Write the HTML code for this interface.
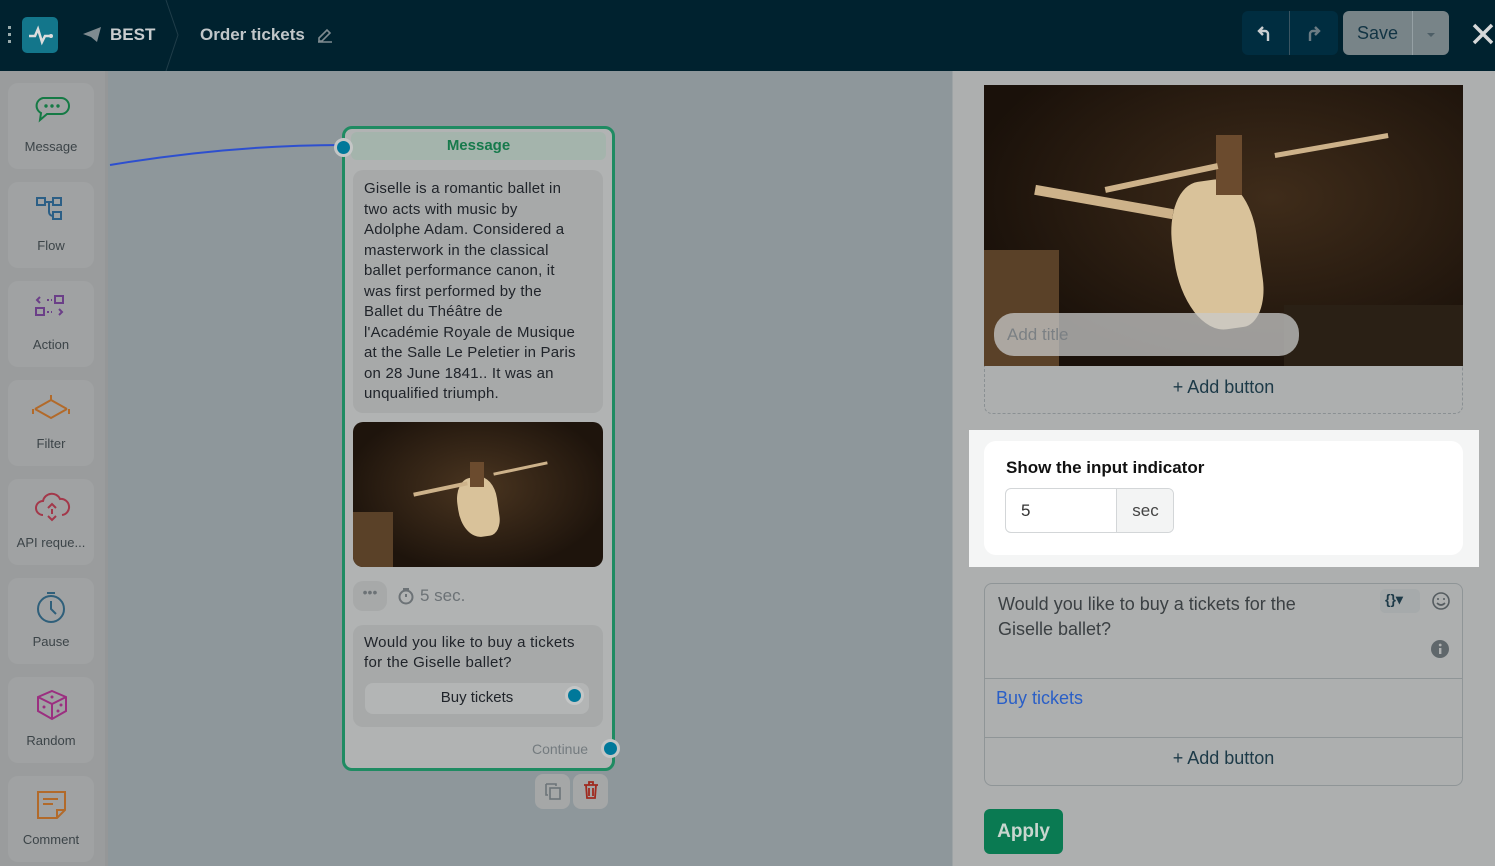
<!DOCTYPE html>
<html><head><meta charset="utf-8"><style>
*{box-sizing:border-box;margin:0;padding:0}
body{width:1495px;height:866px;overflow:hidden;font-family:"Liberation Sans",sans-serif;background:#8e979b;position:relative}
.hdr{position:absolute;left:0;top:0;width:1495px;height:71px;background:#00222f}
.side{position:absolute;left:0;top:71px;width:108px;height:795px;background:#9a9c9d;border-right:3px solid #959798}
.it{position:absolute;left:8px;width:86px;height:86px;background:#a0a2a3;border-radius:10px;text-align:center;font-size:13px;color:#3c4448}
.it svg{position:absolute;left:25px;top:12px}
.it span{position:absolute;left:0;right:0;top:56px}
.rp{position:absolute;left:952px;top:71px;width:543px;height:795px;background:#adafaf;border-left:1px solid #9da3a5}
.node{position:absolute;left:342px;top:126px;width:273px;height:645px;background:#b1b3b3;border:3px solid #1f8b62;border-radius:10px}
.bub{position:absolute;background:#a7a9a9;border-radius:10px}
.dot{position:absolute;width:19px;height:19px;border-radius:50%;background:#00789a;border:3px solid #c4c6c6}
</style></head><body>
<div class="hdr">
 <div style="position:absolute;left:8px;top:26px;width:3px;height:18px;background:repeating-linear-gradient(#9aa 0 3px,transparent 3px 7px)"></div>
 <div style="position:absolute;left:22px;top:17px;width:36px;height:36px;background:#13768b;border-radius:5px"></div>
 <svg style="position:absolute;left:22px;top:17px" width="36" height="36"><path d="M7 19h6l3-7 4 13 3-6h5" fill="none" stroke="#ddd" stroke-width="2.5"/><circle cx="29" cy="19" r="2" fill="#ddd"/></svg>
 <svg style="position:absolute;left:82px;top:26px" width="20" height="17"><path d="M1 8L19 1 15 16 9 11z" fill="#7f8b90"/></svg>
 <div style="position:absolute;left:110px;top:25px;font-size:17px;font-weight:bold;color:#c9cdcf">BEST</div>
 <svg style="position:absolute;left:160px;top:0" width="20" height="71"><path d="M6 0L18 35 6 71" fill="none" stroke="#1f3d49" stroke-width="1"/></svg>
 <div style="position:absolute;left:200px;top:25px;font-size:17px;font-weight:bold;color:#c0c6c9">Order tickets</div>
 <svg style="position:absolute;left:316px;top:26px" width="18" height="18"><path d="M3 12L11 4l3 3-8 8H3z M2 16h14" fill="none" stroke="#7f8b90" stroke-width="1.6"/></svg>
 <div style="position:absolute;left:1242px;top:11px;width:96px;height:44px;background:#002d40;border-radius:6px"></div>
 <div style="position:absolute;left:1289px;top:11px;width:1px;height:44px;background:#3a5562"></div>
 <svg style="position:absolute;left:1256px;top:24px" width="20" height="20"><path d="M12 17V10a3 3 0 0 0-3-3H3M7 3L3 7l4 4" fill="none" stroke="#c9cdcf" stroke-width="2.4"/></svg>
 <svg style="position:absolute;left:1304px;top:24px" width="20" height="20"><path d="M6 17V10a3 3 0 0 1 3-3h6M11 3l4 4-4 4" fill="none" stroke="#6b7c84" stroke-width="2.4"/></svg>
 <div style="position:absolute;left:1343px;top:11px;width:106px;height:44px;background:#788488;border-radius:6px"></div>
 <div style="position:absolute;left:1412px;top:11px;width:1px;height:44px;background:#95a0a4"></div>
 <div style="position:absolute;left:1357px;top:23px;font-size:18px;color:#123444">Save</div>
 <div style="position:absolute;left:1427px;top:33px;border:4px solid transparent;border-top:4px solid #4d5e66"></div>
 <svg style="position:absolute;left:1472px;top:23px" width="22" height="22"><path d="M2 2L20 20M20 2L2 20" stroke="#d6d8d9" stroke-width="3.5"/></svg>
</div>
<div class="side">
 <div class="it" style="top:12px"><svg width="38" height="30"><path d="M10 3h18a8 8 0 0 1 0 16H14l-7 6 1-7A8 8 0 0 1 10 3z" fill="none" stroke="#157a45" stroke-width="2"/><circle cx="13" cy="11" r="1.7" fill="#157a45"/><circle cx="19" cy="11" r="1.7" fill="#157a45"/><circle cx="25" cy="11" r="1.7" fill="#157a45"/></svg><span>Message</span></div>
 <div class="it" style="top:111px"><svg width="40" height="34"><g fill="none" stroke="#2c5f86" stroke-width="2"><rect x="4" y="4" width="8" height="7"/><rect x="20" y="4" width="8" height="7"/><rect x="20" y="18" width="8" height="7"/><path d="M12 8h8M16 8v10a4 4 0 0 0 4 4"/></g></svg><span>Flow</span></div>
 <div class="it" style="top:210px"><svg width="40" height="34"><g fill="none" stroke="#6b3f88" stroke-width="2"><rect x="22" y="3" width="8" height="7"/><rect x="3" y="15" width="8" height="7"/><path d="M7 4L4 7l3 3M14 7h2M18 7h1M14 19h2M18 19h1M26 16l3 3-3 3"/></g></svg><span>Action</span></div>
 <div class="it" style="top:309px"><svg width="44" height="34" style="left:21px"><g fill="none" stroke="#b26a2a" stroke-width="2"><path d="M22 3v5L6 17M22 8l16 9M6 17l16 9 16-9M4 17v5M40 17v5"/></g></svg><span>Filter</span></div>
 <div class="it" style="top:408px"><svg width="40" height="34"><path d="M10 24a7 7 0 0 1 0-14 9 9 0 0 1 17-2 7 7 0 0 1 2 16" fill="none" stroke="#a3384a" stroke-width="2"/><path d="M15 17l4-4 4 4M15 25l4 4 4-4M19 18v5" fill="none" stroke="#a3384a" stroke-width="2"/></svg><span>API reque...</span></div>
 <div class="it" style="top:507px"><svg width="40" height="34"><circle cx="18" cy="19" r="13" fill="none" stroke="#2f5f7a" stroke-width="2"/><path d="M14 3h8M18 11v8l5 5" fill="none" stroke="#2f5f7a" stroke-width="2"/></svg><span>Pause</span></div>
 <div class="it" style="top:606px"><svg width="40" height="34"><path d="M19 2l14 6v14l-14 8-14-8V8z M5 8l14 7 14-7M19 15v15" fill="none" stroke="#9b2f80" stroke-width="2"/><circle cx="19" cy="8" r="1.5" fill="#9b2f80"/><circle cx="11" cy="18" r="1.5" fill="#9b2f80"/><circle cx="25" cy="22" r="1.5" fill="#9b2f80"/><circle cx="28" cy="16" r="1.5" fill="#9b2f80"/></svg><span>Random</span></div>
 <div class="it" style="top:705px"><svg width="40" height="34"><path d="M5 4h27v18l-8 8H5z M24 30v-8h8 M10 11h15M10 16h10" fill="none" stroke="#b26a2a" stroke-width="2"/></svg><span>Comment</span></div>
</div>
<svg style="position:absolute;left:108px;top:140px" width="240" height="30"><path d="M2 25C80 12 160 5 235 5" fill="none" stroke="#2d4fcf" stroke-width="2"/></svg>
<div class="node">
 <div style="position:absolute;left:6px;top:3px;width:255px;height:28px;background:#a4b4ac;border-radius:6px;text-align:center;font-size:15px;font-weight:bold;color:#177a4c;line-height:28px">Message</div>
 <div class="bub" style="left:8px;top:41px;width:250px;height:243px;padding:9px 11px;font-size:15px;line-height:20.5px;letter-spacing:0.2px;white-space:nowrap;color:#20242a">Giselle is a romantic ballet in<br>two acts with music by<br>Adolphe Adam. Considered a<br>masterwork in the classical<br>ballet performance canon, it<br>was first performed by the<br>Ballet du Théâtre de<br>l'Académie Royale de Musique<br>at the Salle Le Peletier in Paris<br>on 28 June 1841.. It was an<br>unqualified triumph.</div>
 <div style="position:absolute;left:8px;top:293px;width:250px;height:145px;border-radius:10px;overflow:hidden;background:radial-gradient(ellipse at 50% 45%,#4a3520,#1e140c 75%)">
  <div style="position:absolute;left:105px;top:55px;width:40px;height:60px;background:#d9c29a;border-radius:40% 40% 30% 50%;transform:rotate(-8deg)"></div>
  <div style="position:absolute;left:117px;top:40px;width:14px;height:25px;background:#6b4b2e"></div>
  <div style="position:absolute;left:60px;top:65px;width:55px;height:4px;background:#cdb28a;transform:rotate(-12deg)"></div>
  <div style="position:absolute;left:140px;top:45px;width:55px;height:3px;background:#cdb28a;transform:rotate(-12deg)"></div>
  <div style="position:absolute;left:0;top:90px;width:40px;height:55px;background:#5a4128"></div>
 </div>
 <div class="bub" style="left:8px;top:452px;width:34px;height:30px;text-align:center;color:#6c7276;font-size:14px;line-height:22px">•••</div>
 <svg style="position:absolute;left:52px;top:458px" width="18" height="18"><circle cx="9" cy="10" r="6.5" fill="none" stroke="#6c7276" stroke-width="2"/><path d="M6 2h6M9 7v3" stroke="#6c7276" stroke-width="2"/></svg>
 <div style="position:absolute;left:75px;top:457px;font-size:17px;color:#6c7276">5 sec.</div>
 <div class="bub" style="left:8px;top:496px;width:250px;height:102px;padding:8px 11px;font-size:15px;line-height:20px;letter-spacing:0.3px;color:#20242a">Would you like to buy a tickets for the Giselle ballet?</div>
 <div style="position:absolute;left:20px;top:554px;width:224px;height:31px;background:#b3b5b5;border-radius:8px;text-align:center;font-size:15px;line-height:30px;color:#20242a">Buy tickets</div>
 <div class="dot" style="left:220px;top:557px"></div>
 <div style="position:absolute;left:187px;top:612px;font-size:14px;color:#747b7f">Continue</div>
 <div class="dot" style="left:256px;top:610px"></div>
 <div class="dot" style="left:-11px;top:9px"></div>
</div>
<div style="position:absolute;left:535px;top:774px;width:35px;height:35px;background:#a5a7a7;border-radius:8px"></div>
<svg style="position:absolute;left:543px;top:781px" width="20" height="20"><path d="M3 3h10v2M3 3v11h2" fill="none" stroke="#6c7478" stroke-width="1.6"/><rect x="7" y="7" width="10" height="11" fill="none" stroke="#6c7478" stroke-width="1.6"/></svg>
<div style="position:absolute;left:573px;top:774px;width:35px;height:35px;background:#a5a7a7;border-radius:8px"></div>
<svg style="position:absolute;left:581px;top:780px" width="20" height="20"><path d="M3 5h14M8 5V2h4v3M5 5l1 13h8l1-13M8 8v8M12 8v8" fill="none" stroke="#a02a1f" stroke-width="1.8"/></svg>
<div class="rp">
 <div style="position:absolute;left:31px;top:14px;width:479px;height:281px;overflow:hidden;background:radial-gradient(ellipse at 60% 40%,#3f2c1a,#1a110a 75%)">
  <div style="position:absolute;left:190px;top:95px;width:85px;height:150px;background:#d9c29a;border-radius:40% 40% 30% 50%;transform:rotate(-8deg)"></div>
  <div style="position:absolute;left:232px;top:50px;width:26px;height:60px;background:#6b4b2e"></div>
  <div style="position:absolute;left:120px;top:90px;width:115px;height:6px;background:#cdb28a;transform:rotate(-12deg)"></div>
  <div style="position:absolute;left:50px;top:112px;width:140px;height:10px;background:#cdb28a;transform:rotate(10deg)"></div>
  <div style="position:absolute;left:290px;top:58px;width:115px;height:5px;background:#cdb28a;transform:rotate(-10deg)"></div>
  <div style="position:absolute;left:0;top:165px;width:75px;height:116px;background:#5a4128"></div>
  <div style="position:absolute;left:300px;top:220px;width:179px;height:61px;background:#2a2015"></div>
  <div style="position:absolute;left:10px;top:228px;width:305px;height:43px;background:rgba(200,202,202,.75);border-radius:20px;font-size:17px;color:#7b8084;padding:12px 13px">Add title</div>
 </div>
 <div style="position:absolute;left:31px;top:295px;width:479px;height:48px;border:1px dashed #8a9093;border-top:none;border-radius:0 0 8px 8px;text-align:center;font-size:18px;color:#1d3a48;line-height:42px">+ Add button</div>
 <div style="position:absolute;left:16px;top:359px;width:510px;height:137px;background:#f4f5f5"></div>
 <div style="position:absolute;left:31px;top:370px;width:479px;height:114px;background:#fff;border-radius:12px">
  <div style="position:absolute;left:22px;top:17px;font-size:17px;font-weight:bold;color:#111">Show the input indicator</div>
  <div style="position:absolute;left:21px;top:47px;width:169px;height:45px;border:1px solid #d3d6d8;border-radius:6px;overflow:hidden">
   <div style="position:absolute;left:15px;top:12px;font-size:17px;color:#333">5</div>
   <div style="position:absolute;left:110px;top:0;width:58px;height:45px;background:#f3f4f4;border-left:1px solid #d3d6d8;font-size:17px;color:#444;text-align:center;line-height:44px">sec</div>
  </div>
 </div>
 <div style="position:absolute;left:31px;top:512px;width:479px;height:203px;border:1px solid #8f9597;border-radius:8px">
  <div style="position:absolute;left:13px;top:8px;font-size:18px;line-height:25px;color:#3b4043">Would you like to buy a tickets for the<br>Giselle ballet?</div>
  <div style="position:absolute;left:395px;top:5px;width:40px;height:24px;background:#a6aaab;border-radius:5px;font-size:14px;color:#1d3a48;padding:2px 5px;font-weight:bold">{}▾</div>
  <svg style="position:absolute;left:446px;top:7px" width="20" height="20"><circle cx="10" cy="10" r="8" fill="none" stroke="#555c60" stroke-width="1.6"/><circle cx="7" cy="8" r="1" fill="#555c60"/><circle cx="13" cy="8" r="1" fill="#555c60"/><path d="M6 12q4 4 8 0" fill="none" stroke="#555c60" stroke-width="1.6"/></svg>
  <svg style="position:absolute;left:446px;top:56px" width="18" height="18"><circle cx="9" cy="9" r="9" fill="#5f676b"/><rect x="8" y="8" width="2.4" height="6" fill="#b0b2b2"/><circle cx="9.2" cy="5" r="1.4" fill="#b0b2b2"/></svg>
  <div style="position:absolute;left:0;top:94px;width:477px;height:1px;background:#8f9597"></div>
  <div style="position:absolute;left:11px;top:104px;font-size:18px;color:#2a5fc7">Buy tickets</div>
  <div style="position:absolute;left:0;top:153px;width:477px;height:1px;background:#8f9597"></div>
  <div style="position:absolute;left:0;top:164px;width:477px;text-align:center;font-size:18px;color:#1d3a48">+ Add button</div>
 </div>
 <div style="position:absolute;left:31px;top:738px;width:79px;height:45px;background:#0a7a52;border-radius:6px;color:#c8d6cf;font-size:19px;font-weight:bold;text-align:center;line-height:45px">Apply</div>
</div>
</body></html>
